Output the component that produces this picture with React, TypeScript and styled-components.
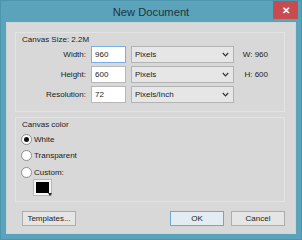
import React from "react";
import styled, { createGlobalStyle } from "styled-components";

const Global = createGlobalStyle`
  html, body { margin: 0; padding: 0; background: #5aa3bb; }
  body { font-family: "Liberation Sans", Arial, sans-serif; font-size: 8px; color: #1b1b1b; }
`;

const Window = styled.div`
  width: 302px;
  height: 240px;
  box-sizing: border-box;
  background: #5aa3bb;
  border: 1px solid #4c95ad;
  display: flex;
  flex-direction: column;
`;

const TitleBar = styled.div`
  height: 21px;
  flex: none;
  display: grid;
  grid-template-columns: 1fr auto 1fr;
  align-items: start;
`;

const Title = styled.div`
  grid-column: 2;
  font-size: 11.2px;
  line-height: 21px;
  color: #1e3340;
  padding-top: 1px;
`;

const CloseButton = styled.div`
  grid-column: 3;
  justify-self: end;
  width: 25px;
  height: 18px;
  margin-right: 3px;
  background: #c74b4f;
  color: #fff;
  font-size: 10px;
  font-weight: bold;
  display: flex;
  align-items: center;
  justify-content: center;
`;

const Client = styled.div`
  flex: 1;
  min-height: 0;
  margin: 0 5px 5px 5px;
  background: #d8d8d8;
  border: 1px solid #c9d7dc;
  padding: 9px 10px 7px 8px;
  display: flex;
  flex-direction: column;
  gap: 5px;
`;

const Group = styled.div<{ $pb: number }>`
  border: 1px solid #e3e3e3;
  padding: 0 5px ${(p) => p.$pb}px 5px;
  display: flex;
  flex-direction: column;
`;

const GroupLabel = styled.div`
  line-height: 11px;
  height: 11px;
  margin-top: 1px;
  padding-left: 1px;
`;

const FieldGrid = styled.div`
  display: grid;
  grid-template-columns: 65px 35px 103px 29px;
  grid-auto-rows: 17px;
  column-gap: 5px;
  row-gap: 3px;
  margin-top: 1px;
  align-items: center;
`;

const FieldLabel = styled.div`
  text-align: right;
`;

const TextInput = styled.div<{ $focused?: boolean }>`
  box-sizing: border-box;
  height: 17px;
  background: #fff;
  border: 1px solid ${(p) => (p.$focused ? "#79aee6" : "#b7b7b7")};
  padding-left: 3px;
  line-height: 15px;
`;

const Select = styled.div`
  box-sizing: border-box;
  height: 17px;
  background: #e6e6e6;
  border: 1px solid #b3b3b3;
  padding: 0 4px 0 3px;
  display: flex;
  align-items: center;
  justify-content: space-between;
`;

const Info = styled.div`
  text-align: right;
  margin-left: -3px;
`;

const RadioList = styled.div`
  display: flex;
  flex-direction: column;
  gap: 5.5px;
  margin-top: 3.5px;
`;

const RadioRow = styled.div`
  display: flex;
  align-items: center;
  gap: 2px;
  height: 11px;
  line-height: 11px;
`;

const RadioCircle = styled.div<{ $checked?: boolean }>`
  box-sizing: border-box;
  width: 11px;
  height: 11px;
  border-radius: 50%;
  border: 1px solid #8c8c8c;
  background: #fff;
  display: flex;
  align-items: center;
  justify-content: center;
  &::after {
    content: "";
    display: ${(p) => (p.$checked ? "block" : "none")};
    width: 5px;
    height: 5px;
    border-radius: 50%;
    background: #111;
  }
`;

const Swatch = styled.div`
  position: relative;
  box-sizing: border-box;
  width: 17px;
  height: 15px;
  margin: 2.5px 0 0 13px;
  border: 2px solid #f4f4f4;
  outline: 1px solid #b8b8b8;
  background: #000;
`;

const SwatchArrow = styled.div`
  position: absolute;
  right: -3px;
  bottom: -3px;
  width: 0;
  height: 0;
  border-left: 2.5px solid transparent;
  border-right: 2.5px solid transparent;
  border-top: 3px solid #222;
`;

const ButtonRow = styled.div`
  display: flex;
  align-items: center;
  margin-top: 4px;
  padding-left: 7px;
  gap: 7px;
`;

const Spacer = styled.div`
  flex: 1;
`;

const Button = styled.div<{ $default?: boolean }>`
  box-sizing: border-box;
  width: 54px;
  height: 15px;
  border: 1px solid ${(p) => (p.$default ? "#6fa6d6" : "#adadad")};
  background: ${(p) => (p.$default ? "#e3ebf3" : "#e5e5e5")};
  display: flex;
  align-items: center;
  justify-content: center;
`;

const Chevron = () => (
  <svg width="7" height="5" viewBox="0 0 7 5">
    <path d="M0.8 1 L3.5 3.8 L6.2 1" fill="none" stroke="#333" strokeWidth="1.2" />
  </svg>
);

const rows = [
  { label: "Width:", value: "960", unit: "Pixels", info: "W: 960", focused: true },
  { label: "Height:", value: "600", unit: "Pixels", info: "H: 600" },
  { label: "Resolution:", value: "72", unit: "Pixels/Inch", info: "" },
];

export default function App() {
  return (
    <>
      <Global />
      <Window>
        <TitleBar>
          <Title>New Document</Title>
          <CloseButton>✕</CloseButton>
        </TitleBar>
        <Client>
          <Group $pb={8}>
            <GroupLabel>Canvas Size: 2.2M</GroupLabel>
            <FieldGrid>
              {rows.map((r) => (
                <React.Fragment key={r.label}>
                  <FieldLabel>{r.label}</FieldLabel>
                  <TextInput $focused={r.focused}>{r.value}</TextInput>
                  <Select>
                    <span>{r.unit}</span>
                    <Chevron />
                  </Select>
                  <Info>{r.info}</Info>
                </React.Fragment>
              ))}
            </FieldGrid>
          </Group>
          <Group $pb={6}>
            <GroupLabel>Canvas color</GroupLabel>
            <RadioList>
              <RadioRow>
                <RadioCircle $checked />
                <span>White</span>
              </RadioRow>
              <RadioRow>
                <RadioCircle />
                <span>Transparent</span>
              </RadioRow>
              <RadioRow>
                <RadioCircle />
                <span>Custom:</span>
              </RadioRow>
            </RadioList>
            <Swatch>
              <SwatchArrow />
            </Swatch>
          </Group>
          <ButtonRow>
            <Button>Templates...</Button>
            <Spacer />
            <Button $default>OK</Button>
            <Button>Cancel</Button>
          </ButtonRow>
        </Client>
      </Window>
    </>
  );
}
